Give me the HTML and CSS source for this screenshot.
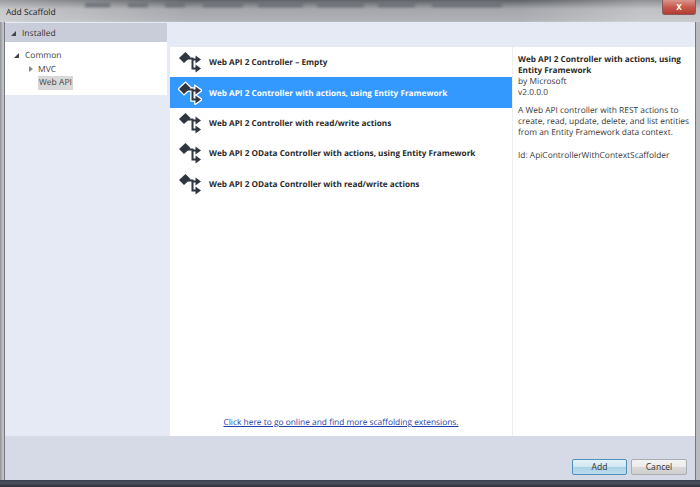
FILE: index.html
```html
<!DOCTYPE html>
<html lang="en">
<head>
<meta charset="utf-8">
<title>Add Scaffold</title>
<link rel="stylesheet" href="styles.css">
</head>
<body>
<svg class="defs" width="0" height="0" aria-hidden="true">
  <symbol id="scaffold" viewBox="0 0 24 24">
    <path d="M9 8.5H14.5V18.5H18M14.5 9.5H18" fill="none" stroke="currentColor" stroke-width="2"/>
    <path d="M1 8L7.5 2L12.5 7L6 13Z" fill="currentColor"/>
    <path d="M17.5 5.5L23 9.5L17.5 13.5Z" fill="currentColor"/>
    <path d="M17.5 14.5L23 18.5L17.5 22.5Z" fill="currentColor"/>
  </symbol>
  <symbol id="scaffold-selected" viewBox="0 0 24 24">
    <path d="M9 8.5H14.5V18.5H18M14.5 9.5H18" fill="none" stroke="#fff" stroke-width="4.5"/>
    <path d="M1 8L7.5 2L12.5 7L6 13Z M17.5 5.5L23 9.5L17.5 13.5Z M17.5 14.5L23 18.5L17.5 22.5Z" fill="#fff" stroke="#fff" stroke-width="2.6"/>
    <path d="M9 8.5H14.5V18.5H18M14.5 9.5H18" fill="none" stroke="#2f3640" stroke-width="2"/>
    <path d="M1 8L7.5 2L12.5 7L6 13Z M17.5 5.5L23 9.5L17.5 13.5Z M17.5 14.5L23 18.5L17.5 22.5Z" fill="#2f3640"/>
  </symbol>
</svg>
<div class="window">
  <header class="titlebar">
    <div class="blurs" aria-hidden="true">
      <i class="blur b1"></i><i class="blur b2"></i><i class="blur b3"></i><i class="blur b4"></i><i class="blur b5"></i><i class="blur b6"></i><i class="blur b7"></i><i class="blur b8"></i>
    </div>
    <span class="title">Add Scaffold</span>
    <button class="close" aria-label="Close">x</button>
  </header>
  <div class="frame">
    <main class="client">
      <aside class="side">
        <div class="installed"><span class="tri solid small"></span>Installed</div>
        <ul class="tree">
          <li class="node lvl1"><span class="tri solid"></span>Common</li>
          <li class="node lvl2"><span class="tri hollow"></span>MVC</li>
          <li class="node lvl2 leaf"><span class="tree-sel">Web API</span></li>
        </ul>
      </aside>
      <section class="center">
        <ul class="list">
          <li class="row"><svg class="ico"><use href="#scaffold"/></svg><span>Web API 2 Controller – Empty</span></li>
          <li class="row sel"><svg class="ico"><use href="#scaffold-selected"/></svg><span>Web API 2 Controller with actions, using Entity Framework</span></li>
          <li class="row"><svg class="ico"><use href="#scaffold"/></svg><span>Web API 2 Controller with read/write actions</span></li>
          <li class="row"><svg class="ico"><use href="#scaffold"/></svg><span>Web API 2 OData Controller with actions, using Entity Framework</span></li>
          <li class="row"><svg class="ico"><use href="#scaffold"/></svg><span>Web API 2 OData Controller with read/write actions</span></li>
        </ul>
        <a class="online" href="#">Click here to go online and find more scaffolding extensions.</a>
      </section>
      <aside class="details">
        <h2 class="d-title">Web API 2 Controller with actions, using Entity Framework</h2>
        <p class="d-meta">by Microsoft<br>v2.0.0.0</p>
        <p class="d-desc">A Web API controller with REST actions to create, read, update, delete, and list entities from an Entity Framework data context.</p>
        <p class="d-id">Id: ApiControllerWithContextScaffolder</p>
      </aside>
    </main>
    <footer class="footer">
      <button class="btn primary">Add</button>
      <button class="btn">Cancel</button>
    </footer>
  </div>
  <div class="bottom-edge"></div>
</div>
</body>
</html>
```
FILE: styles.css
```css
* { box-sizing: border-box; }
html, body { margin: 0; padding: 0; }
body { width: 700px; height: 487px; overflow: hidden; background: #a9abb1; font-family: "Open Sans", "Liberation Sans", sans-serif; color: #333; text-rendering: geometricPrecision; }
.defs { display: block; height: 0; }
ul { list-style: none; margin: 0; padding: 0; }
.window { width: 700px; height: 487px; display: flex; flex-direction: column; background: linear-gradient(90deg, #8f9196 0, #c4c6c9 3px, #b0b2b7 5px, #a8aab0 50%, #b9bbbe 99%); position: relative; }

.titlebar { height: 22px; flex: none; display: flex; align-items: center; justify-content: space-between; padding: 0 4px 0 6px; position: relative; overflow: hidden; background: linear-gradient(90deg, rgba(255,255,255,.38), rgba(255,255,255,0) 190px, rgba(255,255,255,0) 520px, rgba(255,255,255,.3) 640px), linear-gradient(#5f6266 0, #6d7074 2px, #a4a6ab 9px, #aeb0b5 20px, #b9bbc0 22px); }
.blurs { position: absolute; inset: 0; }
.blur { position: absolute; top: 3px; height: 4px; background: #6d7078; filter: blur(1.5px); }
.b1 { left: 85px; width: 25px; } .b2 { left: 128px; width: 20px; } .b3 { left: 165px; width: 20px; }
.b4 { left: 203px; width: 40px; } .b5 { left: 258px; width: 45px; } .b6 { left: 317px; width: 47px; }
.b7 { left: 378px; width: 37px; } .b8 { left: 432px; width: 70px; }
.title { position: relative; font-size: 8.5px; color: #1e1e1e; padding-top: 2px; }
.close { position: relative; width: 34px; height: 15px; margin-top: -7px; padding: 0 0 2px; border: 1px solid #8b5a58; border-top: 0; border-radius: 0 0 3px 3px; background: linear-gradient(#d9968c, #c75a4e 50%, #b23b32); color: #fff; font: bold 10px "Liberation Sans", sans-serif; }

.frame { flex: 1; min-height: 0; margin: 0 5px 0 5px; display: flex; flex-direction: column; background: #e6eaf5; box-shadow: 0 0 0 1px #75787f; }
.client { flex: 1; min-height: 0; display: flex; padding-top: 1px; }

.side { width: 162px; flex: none; }
.installed { height: 19px; display: flex; align-items: center; padding: 1px 0 0 6px; background: #c9cdda; font-size: 8.5px; color: #333; }
.tree { width: 162px; height: 53px; background: #fff; padding-top: 6px; font-size: 8.5px; color: #444; }
.node { height: 14px; display: flex; align-items: center; }
.lvl1 { padding-left: 9px; }
.lvl2 { padding-left: 24px; }
.leaf { padding-left: 33px; }
.tree-sel { display: block; height: 14px; line-height: 14px; padding: 0 1px; background: #d8d8d8; }
.tri { display: inline-block; flex: none; }
.tri.solid { width: 0; height: 0; border-style: solid; border-width: 0 0 5px 5px; border-color: transparent transparent #444 transparent; margin-right: 6px; }
.tri.hollow { width: 0; height: 0; border-style: solid; border-width: 3px 0 3px 4px; border-color: transparent transparent transparent #888; margin-right: 5px; }

.center { width: 342px; flex: none; margin: 24px 0 0 3px; display: flex; flex-direction: column; background: #fff; }
.list { flex: 1; }
.row { height: 30.4px; display: flex; align-items: center; gap: 7px; padding-left: 8px; font-size: 8.2px; font-weight: 700; color: #2a2a2a; white-space: nowrap; }
.row span { padding-top: 1px; }
.row.sel { background: #3399ff; color: #fff; }
.ico { width: 24px; height: 24px; flex: none; color: #2f3640; }
.online { align-self: center; margin: 0 0 8px 0; font-size: 8.4px; color: #1f3fa8; text-decoration: underline; }

.details { flex: 1; margin-top: 24px; background: #fff; border-left: 1px solid #eeeeee; padding: 7px 4px 0 5px; font-size: 8.4px; line-height: 11px; color: #3a3a3a; }
.d-title { margin: 0; font-size: 8.2px; line-height: 11px; font-weight: 700; color: #2a2a2a; }
.d-meta { margin: 0; }
.d-desc { margin: 7px 0 0; }
.d-id { margin: 12px 0 0; }

.footer { height: 44px; flex: none; background: #d5dae6; display: flex; justify-content: flex-end; align-items: flex-start; gap: 4px; padding: 23px 8px 0 0; }
.btn { width: 56px; height: 16px; padding: 0; border: 1px solid #a9acb3; border-radius: 2px; background: linear-gradient(#f4f4f4, #ebebeb 48%, #d8d8d8 52%, #cfcfcf); font: 8.6px "Open Sans", sans-serif; color: #333; }
.btn.primary { width: 55px; border-color: #4f8fb8; background: linear-gradient(#e6f3fa, #cfe6f2 48%, #a9d2e6 52%, #bcdcec); }

.bottom-edge { height: 7px; flex: none; background: linear-gradient(#3c4150, #4c5160 3px, #2c2f38); }
```
